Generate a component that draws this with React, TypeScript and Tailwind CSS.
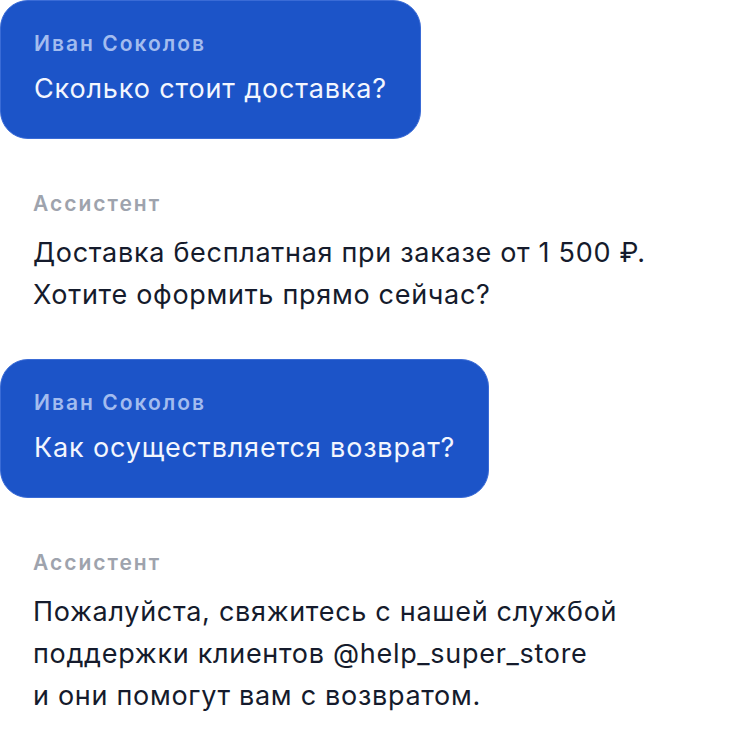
import * as React from 'react';

type Message =
  | { role: 'user'; author: string; text: string }
  | { role: 'assistant'; author: string; lines: string[] };

const messages: Message[] = [
  { role: 'user', author: 'Иван Соколов', text: 'Сколько стоит доставка?' },
  {
    role: 'assistant',
    author: 'Ассистент',
    lines: ['Доставка бесплатная при заказе от 1 500 ₽.', 'Хотите оформить прямо сейчас?'],
  },
  { role: 'user', author: 'Иван Соколов', text: 'Как осуществляется возврат?' },
  {
    role: 'assistant',
    author: 'Ассистент',
    lines: [
      'Пожалуйста, свяжитесь с нашей службой',
      'поддержки клиентов @help_super_store',
      'и они помогут вам с возвратом.',
    ],
  },
];

function UserBubble({ author, text }: { author: string; text: string }) {
  return (
    <div className="rounded-[28px] border border-[#3a6bd6] bg-[#1c54c8] px-[33px] pt-[29px] pb-[28px]">
      <div className="text-[21px] font-semibold leading-[28px] tracking-[2px] text-[#a3bcef]">{author}</div>
      <div className="mt-[10px] text-[27px] leading-[42px] tracking-[0.85px] text-[#f3f6fe]">{text}</div>
    </div>
  );
}

function AssistantReply({ author, lines }: { author: string; lines: string[] }) {
  return (
    <div className="mt-[51px] mb-[43px] px-[33px]">
      <div className="text-[21px] font-semibold leading-[28px] tracking-[2px] text-[#9ea3ad]">{author}</div>
      <div className="mt-[14px] text-[27px] leading-[42px] tracking-[0.7px] text-[#151b2c]">
        {lines.map((line) => (
          <div key={line}>{line}</div>
        ))}
      </div>
    </div>
  );
}

export default function App() {
  return (
    <div className="flex min-h-[742px] w-[736px] flex-col items-start bg-white font-['Inter','Noto_Sans',sans-serif]">
      {messages.map((m, i) =>
        m.role === 'user' ? (
          <UserBubble key={i} author={m.author} text={m.text} />
        ) : (
          <AssistantReply key={i} author={m.author} lines={m.lines} />
        ),
      )}
    </div>
  );
}
